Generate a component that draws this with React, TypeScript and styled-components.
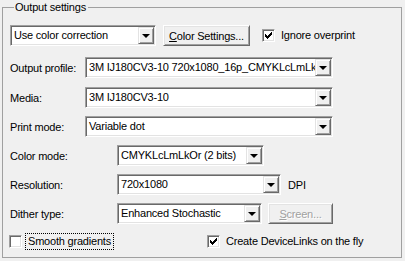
import React from 'react';
import styled, { createGlobalStyle } from 'styled-components';

const GlobalStyle = createGlobalStyle`
  html, body {
    margin: 0;
    padding: 0;
    background: #f0f0f0;
  }
  body {
    font-family: 'Liberation Sans', Arial, sans-serif;
    font-size: 11px;
    letter-spacing: -0.2px;
    color: #000;
  }
`;

const Page = styled.div`
  width: 405px;
  height: 261px;
  padding-top: 1px;
  box-sizing: border-box;
  background: #f0f0f0;
`;

const GroupBox = styled.fieldset`
  margin: 0 0 0 2px;
  width: 400px;
  height: 257px;
  box-sizing: border-box;
  border: 1px solid #a0a0a0;
  padding: 11px 7px 0 7px;
  display: flex;
  flex-direction: column;
`;

const GroupTitle = styled.legend`
  margin-left: 4px;
  padding: 0 2px 0 1px;
  line-height: 13px;
  font-size: 11px;
`;

const Row = styled.div<{ $top?: number }>`
  display: flex;
  align-items: center;
  height: 21px;
  margin-top: ${(p) => p.$top ?? 8}px;
`;

const Label = styled.span<{ $width: number }>`
  width: ${(p) => p.$width}px;
  flex: none;
  white-space: nowrap;
  padding-top: 1px;
`;

const Combo = styled.div<{ $width: number }>`
  width: ${(p) => p.$width}px;
  height: 21px;
  flex: none;
  box-sizing: border-box;
  display: flex;
  background: #fff;
  border: 1px solid;
  border-color: #a0a0a0 #fff #fff #a0a0a0;
  box-shadow: inset 1px 1px 0 #696969, inset -1px -1px 0 #e3e3e3;
  padding: 1px;
`;

const ComboText = styled.span`
  flex: 1;
  min-width: 0;
  overflow: hidden;
  white-space: nowrap;
  line-height: 17px;
  padding-left: 2px;
`;

const DropButton = styled.span`
  width: 16px;
  height: 17px;
  flex: none;
  box-sizing: border-box;
  background: #f0f0f0;
  border: 1px solid;
  border-color: #e3e3e3 #696969 #696969 #e3e3e3;
  box-shadow: inset 1px 1px 0 #fff, inset -1px -1px 0 #a0a0a0;
  display: flex;
  align-items: center;
  justify-content: center;
  &::after {
    content: '';
    width: 0;
    height: 0;
    border-left: 4px solid transparent;
    border-right: 4px solid transparent;
    border-top: 4px solid #000;
    margin-top: 1px;
  }
`;

const PushButton = styled.button<{ $width: number; $gap: number }>`
  width: ${(p) => p.$width}px;
  margin-left: ${(p) => p.$gap}px;
  height: 21px;
  flex: none;
  box-sizing: border-box;
  padding: 0;
  font: inherit;
  font-size: 11px;
  letter-spacing: -0.2px;
  color: ${(p) => (p.disabled ? '#a0a0a0' : '#000')};
  text-shadow: ${(p) => (p.disabled ? '1px 1px 0 #fff' : 'none')};
  background: #f0f0f0;
  border: 1px solid;
  border-color: #fff #696969 #696969 #fff;
  box-shadow: inset 1px 1px 0 #e3e3e3, inset -1px -1px 0 #a0a0a0;
  u {
    text-decoration: underline;
  }
`;

const CheckLabel = styled.label<{ $focus?: boolean; $gap?: number; $width?: number }>`
  display: flex;
  align-items: center;
  flex: none;
  white-space: nowrap;
  margin-left: ${(p) => p.$gap ?? 0}px;
  width: ${(p) => (p.$width ? `${p.$width}px` : 'auto')};
`;

const CheckText = styled.span<{ $focus?: boolean }>`
  margin-left: 4px;
  padding: 1px 2px;
  line-height: 13px;
  outline: ${(p) => (p.$focus ? '1px dotted #000' : 'none')};
`;

const Box = styled.span`
  width: 13px;
  height: 13px;
  flex: none;
  box-sizing: border-box;
  background: #fff;
  border: 1px solid;
  border-color: #a0a0a0 #fff #fff #a0a0a0;
  box-shadow: inset 1px 1px 0 #696969, inset -1px -1px 0 #e3e3e3;
  display: flex;
  align-items: center;
  justify-content: center;
`;

const Suffix = styled.span`
  margin-left: 7px;
  padding-top: 1px;
`;

const BottomRow = styled.div`
  display: flex;
  align-items: center;
  margin-top: 9px;
  height: 17px;
  margin-left: -1px;
`;

type CheckProps = { checked: boolean; label: string; focus?: boolean; gap?: number; width?: number };

function CheckBox({ checked, label, focus, gap, width }: CheckProps) {
  return (
    <CheckLabel $gap={gap} $width={width}>
      <Box>
        {checked && (
          <svg width="7" height="7" viewBox="0 0 7 7">
            <path d="M0 2h1v1h1v1h1V3h1V2h1V1h1V0h1v3H6v1H5v1H4v1H3v1H2V6H1V5H0z" fill="#000" />
          </svg>
        )}
      </Box>
      <CheckText $focus={focus}>{label}</CheckText>
    </CheckLabel>
  );
}

function ComboBox({ width, value }: { width: number; value: string }) {
  return (
    <Combo $width={width}>
      <ComboText>{value}</ComboText>
      <DropButton />
    </Combo>
  );
}

export default function App() {
  return (
    <Page>
      <GlobalStyle />
      <GroupBox>
        <GroupTitle>Output settings</GroupTitle>
        <Row $top={0}>
          <ComboBox width={146} value="Use color correction" />
          <PushButton $width={87} $gap={7}>
            <u>C</u>olor Settings...
          </PushButton>
          <CheckBox checked gap={12} label="Ignore overprint" />
        </Row>
        <Row $top={11}>
          <Label $width={75}>Output profile:</Label>
          <ComboBox width={248} value="3M IJ180CV3-10 720x1080_16p_CMYKLcLmLkOr" />
        </Row>
        <Row $top={9}>
          <Label $width={75}>Media:</Label>
          <ComboBox width={248} value="3M IJ180CV3-10" />
        </Row>
        <Row>
          <Label $width={75}>Print mode:</Label>
          <ComboBox width={248} value="Variable dot" />
        </Row>
        <Row>
          <Label $width={107}>Color mode:</Label>
          <ComboBox width={147} value="CMYKLcLmLkOr (2 bits)" />
        </Row>
        <Row>
          <Label $width={107}>Resolution:</Label>
          <ComboBox width={164} value="720x1080" />
          <Suffix>DPI</Suffix>
        </Row>
        <Row>
          <Label $width={107}>Dither type:</Label>
          <ComboBox width={145} value="Enhanced Stochastic" />
          <PushButton $width={65} $gap={6} disabled>
            <u>S</u>creen...
          </PushButton>
        </Row>
        <BottomRow>
          <CheckBox checked={false} focus width={198} label="Smooth gradients" />
          <CheckBox checked label="Create DeviceLinks on the fly" />
        </BottomRow>
      </GroupBox>
    </Page>
  );
}
